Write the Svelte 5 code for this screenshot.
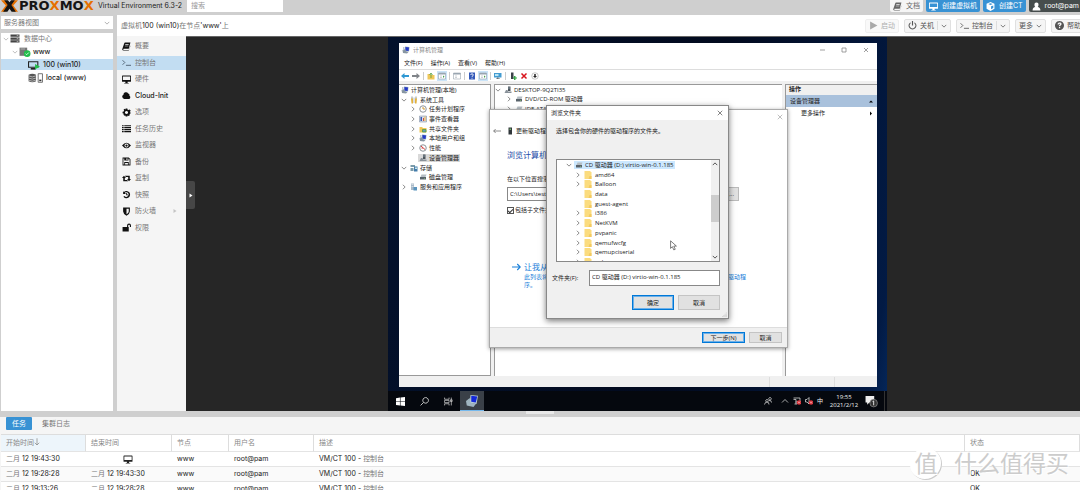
<script>
  const menu = [
    { icon: 'book', label: '概要' },
    { icon: 'term', label: '控制台', active: true },
    { icon: 'screen', label: '硬件' },
    { icon: 'cloud', label: 'Cloud-Init', latin: true },
    { icon: 'gear', label: '选项' },
    { icon: 'list', label: '任务历史' },
    { icon: 'eye', label: '监视器' },
    { icon: 'floppy', label: '备份' },
    { icon: 'retweet', label: '复制' },
    { icon: 'history', label: '快照' },
    { icon: 'shield', label: '防火墙', sub: true },
    { icon: 'unlock', label: '权限' },
  ];

  const tasks = [
    { start: '12 19:43:30', end: null, status: '' },
    { start: '12 19:28:28', end: '12 19:43:30', status: 'OK' },
    { start: '12 19:13:26', end: '12 19:28:28', status: 'OK' },
  ];

  // level, open state (v = open, > = closed), icon, label
  const mgmtTree = [
    [0, '', 'pc', '计算机管理(本地)'],
    [1, 'v', 'tools', '系统工具'],
    [2, '>', 'clock', '任务计划程序'],
    [2, '>', 'event', '事件查看器'],
    [2, '>', 'share', '共享文件夹'],
    [2, '>', 'pc', '本地用户和组'],
    [2, '>', 'perf', '性能'],
    [2, '', 'device', '设备管理器'],
    [1, 'v', 'store', '存储'],
    [2, '', 'drive', '磁盘管理'],
    [1, '>', 'service', '服务和应用程序'],
  ];

  const folders = [
    ['amd64', true], ['Balloon', true], ['data', false], ['guest-agent', false],
    ['i386', true], ['NetKVM', true], ['pvpanic', true], ['qemufwcfg', true],
    ['qemupciserial', true], ['qxl', true],
  ];

  const toolbar = ['back', 'fwd', '|', 'up', 'pane*', '|', 'props', '|', 'help', 'pane*', '|', 'monitor', '|', 'plug', 'del', 'down'];

  const icons = {
    book: 'M5 1h10l-3 11H3c-1 0-1 2 0 2h9l3-8v1l-3 8H3C0 15 0 13 1 11L4 2zM6 4l-.4 1.200h6L12 4zM5.400 6.500L5 7.700h6l.4-1.200z',
    screen: 'M1 1h14q1 0 1 1v9q0 1-1 1h-5v2h2v1H4v-1h2v-2H1q-1 0-1-1V2q0-1 1-1zM1.500 2.500v6.500h13V2.500z',
    cloud: 'M4 14a4 4 0 0 1-1.500-7.500A4.500 4.500 0 0 1 11 4.500a3 3 0 0 1 2 4A3 3 0 0 1 13 14z',
    gear: 'M6.500 1h3l.5 2 1.500.6 2-1 1.900 2-1.100 1.900.7 1.500v2l-1.500.7 .3 2-2.300 1.700-1.500-.9-.5 1.500h-3L6 13.500l-1.500.4-1.900-2 .6-1.600L1 9.500v-3l2-.5.6-1.500-.8-1.500L4.500 1.500 6 2.500zM8 5.200a2.800 2.800 0 1 0 .01 0z',
    list: 'M0 2h3v2H0zM4 2h12v2H4zM0 5.500h3v2H0zM4 5.500h12v2H4zM0 9h3v2H0zM4 9h12v2H4zM0 12.500h3v2H0zM4 12.500h12v2H4z',
    eye: 'M0 8q8-10 16 0q-8 10-16 0zM8 4.500a3.500 3.500 0 1 0 .01 0zM8 6a2 2 0 1 1-.01 0z',
    floppy: 'M1 1h11l3 3v11H1zM2.500 2.500v11H4V9h8v4.500h1.500v-9L11.500 2.500V6H4V2.500zM7.500 2.500V5H10V2.500zM5.500 10.500v3h5v-3z',
    retweet: 'M3.500 3L0 7h2.200v6H11l-2-2.500H5V7h2zM12.500 13L16 9h-2.200V3H5l2 2.500h4V9H9z',
    history: 'M2 2v5h5L5 5a4 4 0 1 1-.5 5.500L2.500 12A6.500 6.500 0 1 0 3.500 3.500zM7.500 5v4.500H11V8H9V5z',
    shield: 'M2 1h12v7q0 4-6 7.500Q2 12 2 8zM8 3v10q4-2.500 4-5V3z',
    unlock: 'M1 7h8V4.500a3.500 3.500 0 0 1 7 0V7h-2V4.500a1.500 1.500 0 0 0-3 0V7h1v8H1z',
    power: 'M7 0h2v8H7zM4.500 2v2.500a5 5 0 1 0 7 0V2a7 7 0 1 1-7 0z',
    play: 'M2 1l13 7-13 7z',
    cube: 'M8 0l7 3v9l-7 4-7-4V3zM8 2L4 3.600 8 5.500l4-1.900zM9 7.500v5.500l4-2.300V6z',
    user: 'M8 1c5 0 4 7 2 8 3 .5 5 2 5 6H1c0-4 2-5.500 5-6C4 8 3 1 8 1z',
    question: 'M8 0a8 8 0 1 1-.01 0zM4.500 6h2.200q.2-1.500 1.500-1.300c1.300.3.8 1.400 0 2-1 .7-1.200 1.200-1.200 2.500h2.200c0-1.500 2.500-1.500 2.500-4C11.500 2 4.800 1.800 4.500 6zM7 10.500V13h2.200v-2.500z',
    server: 'M0 1h16v4H0zM0 6h16v4H0zM0 11h16v4H0zM11 2.500v1h3v-1zM11 7.500v1h3v-1zM11 12.500v1h3v-1z',
  };
</script>

{#snippet fa(name)}
  <svg class="fa" viewBox="0 0 16 16" aria-hidden="true">
    {#if name === 'term'}
      <path d="M1 4l4 4-4 4M7 13h9" fill="none" stroke="currentColor" stroke-width="1.5" />
    {:else}
      <path d={icons[name]} fill="currentColor" fill-rule="evenodd" />
    {/if}
  </svg>
{/snippet}

{#snippet chev(dir)}
  <svg class="chev" viewBox="0 0 8 8" aria-hidden="true">
    {#if dir}
      <path d={{ v: 'M1 2.500l3 3 3-3', '>': 'M2.500 1l3 3-3 3', '^': 'M1 5.500l3-3 3 3' }[dir]} fill="none" stroke="currentColor" />
    {/if}
  </svg>
{/snippet}

{#snippet win(name)}
  <svg class="win-ico" viewBox="0 0 16 16" aria-hidden="true">
    {#if name === 'pc'}
      <path d="M6 1l9 1-1 9-8-1z" fill="#93a9bd" /><path d="M7 2l7 1-1 7-6-1z" fill="#2438c8" />
      <path d="M1 8l5-2 1 4 6 2-3 3-8-1z" fill="#8795a1" /><path d="M2 2h3v5l-3 2z" fill="#bcc7d0" />
    {:else if name === 'tools'}
      <path d="M4 1v5M12 1v5" stroke="#8b949a" stroke-width="2" /><path d="M2 5h4v10H3zM10 5h4l-1 10h-3z" fill="#e2b13c" /><path d="M7 3h2v11H7z" fill="#b8bfc4" />
    {:else if name === 'clock' || name === 'perf'}
      <circle cx="8" cy="8" r="6.500" fill="#fff" stroke="#8d9398" stroke-width="2" />
      <path d={name === 'clock' ? 'M8 4v4h4' : 'M4 4l8 7M5 8h3'} fill="none" stroke={name === 'clock' ? '#d09a35' : '#d33c3c'} stroke-width="2" />
    {:else if name === 'event'}
      <path d="M1 2h14v12H1z" fill="#d8dde6" stroke="#70829b" /><path d="M3 4h3v8H3z" fill="#3759b5" /><path d="M8 6h2v6H8z" fill="#cc5544" /><path d="M11 3h2v9h-2z" fill="#edb63e" />
    {:else if name === 'share' || name === 'up'}
      <path d="M1 4h5l2 2h7v9H1z" fill="#efc75a" /><path d={name === 'up' ? 'M8 12V3M5 6l3-4 3 4' : 'M7 9h7v5H7z'} fill={name === 'up' ? 'none' : '#6d9dba'} stroke="#4c9c3f" stroke-width="1.500" />
    {:else if name === 'device'}
      <path d="M8 1h5v9H8z" fill="#4d555c" /><path d="M1 14l3-6h3l1 3h7v3z" fill="#899199" /><path d="M9 3h2v2H9z" fill="#b6d1df" />
    {:else if name === 'store'}
      <path d="M1 2h9v4H1zM1 8h6v6H1z" fill="#7b9baa" /><path d="M8 5h7v10H8z" fill="#447caa" /><path d="M10 7h4v3h-4z" fill="#c9e6e9" />
    {:else if name === 'drive'}
      <path d="M5 3h10l-2 5H3z" fill="#b6bec4" /><path d="M2 8h12v5H2z" fill="#59636b" /><path d="M10 10h2v1h-2z" fill="#8fe26b" />
    {:else if name === 'service'}
      <path d="M2 1h6v13H2z" fill="#a9bac9" /><path d="M7 8h7v7H7z" fill="#5b94bd" /><path d="M3 3h4v1H3zM3 6h4v1H3z" fill="#fff" />
    {:else if name === 'back' || name === 'fwd'}
      <path d={name === 'back' ? 'M0 8l7-6v4h9v4H7v4z' : 'M16 8L9 2v4H0v4h9v4z'} fill={name === 'back' ? '#2f98d3' : '#808489'} />
    {:else if name === 'pane' || name === 'props'}
      <path d="M1 2h14v12H1z" fill="#fff" stroke="#84929e" /><path d="M1 2h14v3H1z" fill="#99a5b0" /><path d="M4 8h4M4 11h4" stroke="#9aa4ac" />
      {#if name === 'pane'}<path d="M10 7l3 2-3 3z" fill="#45a049" />{/if}
    {:else if name === 'help'}
      <path d="M2 1h12v14H2z" fill="#3359b9" /><path d="M5.500 6q0-2.500 2.500-2.500T10.500 6Q10.500 7.500 8 9v1.500M8 12v1.500" fill="none" stroke="#fff" stroke-width="1.700" />
    {:else if name === 'monitor'}
      <path d="M0 2h15v9H0z" fill="#439bd0" /><path d="M2 4h7v4H2z" fill="#b9e4f5" /><path d="M6 11h3v2h3v1H4v-1h2z" fill="#65727b" />
    {:else if name === 'plug'}
      <path d="M4 1h5v13H4z" fill="#3b4248" /><path d="M10 8h3v3h3v2h-3v3h-3v-3H8v-2h2z" fill="#38a548" />
    {:else if name === 'del'}
      <path d="M3 3l10 10M13 3L3 13" stroke="#d8141c" stroke-width="3" />
    {:else if name === 'down'}
      <circle cx="8" cy="8" r="6.500" fill="#fff" stroke="#8e8e8e" /><path d="M6.500 4h3v4H12l-4 4-4-4h2.500z" fill="#222" />
    {:else if name === 'usb'}
      <path d="M5 1h7v14H5z" fill="#30363a" /><path d="M7 3h3v3H7z" fill="#6fb365" />
    {:else if name === 'folder'}
      <path d="M1 0h11l3 3v13H1z" fill="#fbdc7f" /><path d="M11 10h4v6H9z" fill="#f3ca60" />
    {/if}
  </svg>
{/snippet}

<div class="app">
  <header class="top">
    <svg class="logo" viewBox="0 0 32 24" aria-label="Proxmox">
      <path d="M0 0h8l8 9-8 13H0l9-12zM32 0h-8l-8 9 8 13h8l-9-12z" fill="#e57000" />
      <path d="M6 0h7l3 4 3-4h7l-6.500 9L28 22h-8l-4-6-4 6H4l8.500-13z" fill="#151515" />
    </svg>
    <span class="brand">PRO<b>X</b>MO<b>X</b></span>
    <span class="ver">Virtual Environment 6.3-2</span>
    <input class="search" placeholder="搜索" aria-label="搜索" />
    <div class="top-btns">
      <button class="tb light">{@render fa('book')}文档</button>
      <button class="tb blue">{@render fa('screen')}创建虚拟机</button>
      <button class="tb blue">{@render fa('cube')}创建CT</button>
      <button class="tb dark">{@render fa('user')}root@pam {@render chev('v')}</button>
    </div>
  </header>

  <div class="main">
    <aside class="nav">
      <div class="view">
        <select aria-label="视图"><option>服务器视图</option></select>
        {@render chev('v')}
      </div>
      <ul class="tree">
        <li class="l0">{@render chev('v')}{@render fa('server')}<span>数据中心</span></li>
        <li class="l1 latin">
          {@render chev('v')}
          <svg class="node" viewBox="0 0 22 18" aria-hidden="true"><path d="M1 1h14v15H1z" fill="#777" /><path d="M3 3h8v1H3z" fill="#ddd" /><circle cx="15" cy="12" r="6" fill="#21bf4b" /><path d="M12 12l2 2 4-4" fill="none" stroke="#fff" stroke-width="1.500" /></svg>
          <span>www</span>
        </li>
        <li class="l2 latin sel">
          <svg class="node" viewBox="0 0 22 18" aria-hidden="true"><path d="M1 3h17v10H1z" fill="none" stroke="#222" stroke-width="2" /><path d="M5 16h9" stroke="#222" stroke-width="3" /><path d="M13 7l9 5-9 5z" fill="#21bf4b" /></svg>
          <span>100 (win10)</span>
        </li>
        <li class="l2 latin">
          <svg class="node wide" viewBox="0 0 28 18" aria-hidden="true"><path d="M1 3q7-4 14 0v12q-7 4-14 0z" fill="#555" /><path d="M1 5q7 4 14 0M1 9q7 4 14 0M1 13q7 4 14 0" fill="none" stroke="#fff" /><path d="M19 1h8v16h-8z" fill="#fff" stroke="#555" stroke-width="1.500" /><path d="M21 12h4v3h-4z" fill="#333" /></svg>
          <span>local (www)</span>
        </li>
      </ul>
    </aside>

    <section class="content">
      <div class="bar">
        <h1>虚拟机<b>100 (win10)</b>在节点<b>'www'</b>上</h1>
        <button class="bt" disabled>{@render fa('play')}启动</button>
        <button class="bt">{@render fa('power')}关机<i></i>{@render chev('v')}</button>
        <button class="bt">{@render fa('term')}控制台<i></i>{@render chev('v')}</button>
        <button class="bt">更多 {@render chev('v')}</button>
        <button class="bt">{@render fa('question')}帮助</button>
      </div>
      <div class="body">
        <nav class="menu">
          {#each menu as m}
            <a href="#{m.icon}" class:active={m.active} class:latin={m.latin}>
              {@render fa(m.icon)}<span>{m.label}</span>
              {#if m.sub}<svg class="sub" viewBox="0 0 8 8" aria-hidden="true"><path d="M1 0l6 4-6 4z" fill="#c4c4c4" /></svg>{/if}
            </a>
          {/each}
        </nav>

        <div class="console">
          <button class="handle" aria-label="展开"><svg viewBox="0 0 8 8"><path d="M1 0l6 4-6 4z" fill="#fff" /></svg></button>
          <div class="vm">
            <!-- computer management -->
            <div class="w mgmt">
              <div class="w-title">{@render win('pc')}<span>计算机管理</span>
                <svg class="caps" viewBox="0 0 50 8" aria-hidden="true"><path d="M1 4h5M23 2h4v4h-4zM45 2l4 4M49 2l-4 4" fill="none" stroke="#888" stroke-width=".8" /></svg>
              </div>
              <div class="w-menu"><span>文件(F)</span><span>操作(A)</span><span>查看(V)</span><span>帮助(H)</span></div>
              <div class="w-tools">
                {#each toolbar as t}
                  {#if t === '|'}<i></i>{:else}<span class:on={t.endsWith('*')}>{@render win(t.replace('*', ''))}</span>{/if}
                {/each}
              </div>
              <div class="panes">
                <div class="pane-l">
                  <ul class="wt">
                    {#each mgmtTree as [lvl, open, ico, label]}
                      <li class="d{lvl}">
                        {#if lvl}{@render chev(open)}{/if}
                        <span class="it" class:cur={ico === 'device'}>{@render win(ico)}<span>{label}</span></span>
                      </li>
                    {/each}
                  </ul>
                </div>
                <div class="pane-m">
                  <ul class="wt dev">
                    <li>{@render chev('v')}<span class="it">{@render win('device')}<span>DESKTOP-9Q2TI35</span></span></li>
                    <li class="d2">{@render chev('>')}<span class="it">{@render win('drive')}<span>DVD/CD-ROM 驱动器</span></span></li>
                    <li class="d2">{@render chev('>')}<span class="it">{@render win('drive')}<span>IDE ATA/ATAPI 控制器</span></span></li>
                  </ul>
                </div>
                <div class="pane-r">
                  <div class="act-h">操作</div>
                  <div class="act-s">设备管理器<svg viewBox="0 0 8 8"><path d="M0 6l4-4 4 4z" /></svg></div>
                  <div class="act-m">更多操作<svg viewBox="0 0 8 8"><path d="M2 0l4 4-4 4z" /></svg></div>
                </div>
              </div>
              <div class="w-status"><i></i><i></i></div>
            </div>

            <!-- driver wizard -->
            <div class="w wizard">
              <div class="wz-close"><svg viewBox="0 0 8 8"><path d="M1 1l6 6M7 1L1 7" stroke="#aaa" /></svg></div>
              <div class="wz-top">
                <svg viewBox="0 0 12 8" aria-hidden="true"><path d="M12 4H1M4 1L1 4l3 3" fill="none" stroke="#555" /></svg>
                {@render win('usb')}<span>更新驱动程序 - PCI 设备</span>
              </div>
              <div class="wz-body">
                <h2>浏览计算机上的驱动程序</h2>
                <label for="path">在以下位置搜索驱动程序:</label>
                <div class="wz-path"><input id="path" value="C:\Users\test\Documents" /><button>浏览...</button></div>
                <label class="chk"><input type="checkbox" checked />包括子文件夹(I)</label>
              </div>
              <div class="wz-link">
                <svg viewBox="0 0 12 10" aria-hidden="true"><path d="M0 5h11M7 1l4 4-4 4" fill="none" stroke="#1a80da" stroke-width="1.500" /></svg>
                <div>
                  <a href="#pick">让我从计算机上的可用驱动程序列表中选取(L)</a>
                  <p>此列表将显示与设备兼容的可用驱动程序，以及与该设备属于同一类别的所有驱动程序。</p>
                </div>
              </div>
              <div class="wz-foot"><button class="wb def">下一步(N)</button><button class="wb">取消</button></div>
            </div>

            <!-- folder picker -->
            <div class="w picker">
              <div class="pk-title">浏览文件夹<svg viewBox="0 0 8 8"><path d="M1 1l6 6M7 1L1 7" stroke="#333" stroke-width=".8" /></svg></div>
              <div class="pk-body">
                <p>选择包含你的硬件的驱动程序的文件夹。</p>
                <div class="pk-box">
                  <ul class="wt pk-tree">
                    <li class="root">{@render chev('v')}<span class="it">{@render win('drive')}<span>CD 驱动器 (D:) virtio-win-0.1.185</span></span></li>
                    {#each folders as [name, kids]}
                      <li class="d2">{@render chev(kids ? '>' : '')}<span class="it">{@render win('folder')}<span>{name}</span></span></li>
                    {/each}
                  </ul>
                  <div class="sb">{@render chev('^')}<i></i>{@render chev('v')}</div>
                </div>
                <div class="pk-row"><label for="folder">文件夹(F):</label><input id="folder" value="CD 驱动器 (D:) virtio-win-0.1.185" /></div>
                <div class="pk-btns"><button class="wb def">确定</button><button class="wb">取消</button></div>
              </div>
              <svg class="grip" viewBox="0 0 8 8"><path d="M7 1v1M5 3v1M7 3v1M3 5v1M5 5v1M7 5v1M1 7v1M3 7v1M5 7v1M7 7v1" stroke="#aaa" /></svg>
            </div>
            <svg class="cursor" viewBox="0 0 12 18" aria-hidden="true"><path d="M1 1v13l3-3 2.500 5.500 2.500-1L6.500 10H11z" fill="#fff" stroke="#222" /></svg>

            <div class="taskbar">
              <span class="tk"><svg viewBox="0 0 16 16"><path d="M0 2l7-1v6.500H0zM8 1l8-1v7.500H8zM0 8.500h7V15l-7-1zM8 8.500h8V16l-8-1z" fill="#fff" /></svg></span>
              <span class="tk"><svg viewBox="0 0 16 16"><path d="M10 1a5 5 0 1 1-.01 0zM6.500 9.500L1 15" fill="none" stroke="#ddd" stroke-width="1.500" /></svg></span>
              <span class="tk"><svg viewBox="0 0 16 16"><path d="M1 1v3h8V1M1 15v-3h8v3M1 6h8v4H1zM13 1v14M11.500 5h3v3h-3z" fill="none" stroke="#ccc" stroke-width="1.300" /></svg></span>
              <span class="tk run"><svg viewBox="0 0 16 16"><path d="M6 0l10 1-2 11-9-1z" fill="#b9ccd8" /><path d="M7 1l8 1-2 8-6-1z" fill="#1428d8" /><path d="M0 8l5-4 1 6 7 2-3 4-9-2z" fill="#9fb4c0" /></svg></span>
              <span class="gap"></span>
              <svg class="ty" viewBox="0 0 16 16"><path d="M6 5a2.500 2.500 0 1 1-.01 0zM1 15q1-5 5-5t4 5M12 1a2.500 2.500 0 1 1-.01 0zM10 7q5-1 5 4" fill="none" stroke="#ddd" stroke-width="1.500" /></svg>
              <span class="sp"></span>
              <svg class="ty" viewBox="0 0 16 16"><path d="M2 11l6-6 6 6" fill="none" stroke="#ddd" stroke-width="1.500" /></svg>
              <svg class="ty" viewBox="0 0 16 16"><path d="M1 2h13v8H5M1 5h5v9M3 14h5" fill="none" stroke="#ddd" stroke-width="1.500" /><circle cx="12" cy="11" r="4.500" fill="#d92c35" /><path d="M10 9l4 4M14 9l-4 4" stroke="#fff" /></svg>
              <svg class="ty" viewBox="0 0 16 16"><path d="M1 5h3l4-4v13l-4-4H1z" fill="none" stroke="#ddd" stroke-width="1.500" /><circle cx="12" cy="11" r="4.500" fill="#d92c35" /><path d="M10 9l4 4M14 9l-4 4" stroke="#fff" /></svg>
              <span>中</span>
              <span class="clock">19:55<br />2021/2/12</span>
              <svg class="note" viewBox="0 0 24 24"><path d="M1 2h16v12H8l-4 4v-4H1z" fill="#eee" /><circle cx="16" cy="15" r="7" fill="#333" stroke="#aaa" /><path d="M14 12l2-1v8" fill="none" stroke="#fff" stroke-width="1.500" /></svg>
              <i></i>
            </div>
          </div>
        </div>
      </div>
    </section>
  </div>

  <div class="split"><span></span></div>

  <section class="log">
    <div class="tabs"><button class="on">任务</button><button>集群日志</button></div>
    <table>
      <colgroup><col class="c-time" /><col class="c-end" /><col class="c-node" /><col class="c-time" /><col /><col class="c-st" /></colgroup>
      <thead>
        <tr>
          <th class="sorted">开始时间<svg viewBox="0 0 8 10"><path d="M4 0v9M1 6l3 3 3-3" fill="none" stroke="#888" /></svg></th>
          <th>结束时间</th><th>节点</th><th>用户名</th><th>描述</th><th>状态</th>
        </tr>
      </thead>
      <tbody>
        {#each tasks as t}
          <tr>
            <td><em>二月</em> {t.start}</td>
            <td class:busy={!t.end}>{#if t.end}<em>二月</em> {t.end}{:else}{@render fa('screen')}{/if}</td>
            <td>www</td>
            <td>root@pam</td>
            <td>VM/CT 100 - <em>控制台</em></td>
            <td>{t.status}</td>
          </tr>
        {/each}
      </tbody>
    </table>
  </section>

  <div class="mark"><span>值</span>什么值得买</div>
</div>

<style>
  :global(body){background:#fff}
  .app{position:relative;height:100vh;display:flex;flex-direction:column;overflow:hidden;background:#cfcfcf;
    font:7px/10px Inter,"Noto Sans CJK SC",sans-serif;color:#777}
  .app *{box-sizing:border-box}
  button,input,select{font:inherit;color:inherit;margin:0;padding:0;border:0;border-radius:0;background:none}
  button{display:flex;align-items:center;justify-content:center;white-space:nowrap}
  ul{list-style:none;margin:0;padding:0}
  h1,h2,p{margin:0;font:inherit}
  a{color:inherit;text-decoration:none}
  svg{display:block;flex-shrink:0}
  .fa{width:9px;height:9px}
  .chev{width:6px;height:6px}
  .latin{color:#222;font-weight:500}

  /* top bar */
  .top{height:15px;flex-shrink:0;display:flex;align-items:flex-start;line-height:12px}
  .logo{width:17px;height:13px;margin-left:1px}
  .brand{width:79px;margin-left:1px;font:bold 13px/12px "DejaVu Sans",sans-serif;color:#151515}
  .brand b{color:#e57000}
  .ver{width:89px;color:#222;white-space:nowrap}
  .search{width:96px;height:12px;padding-left:4px;background:#fff}
  .search::placeholder{color:#999;opacity:1}
  .top-btns{margin-left:auto;display:flex;gap:3px;margin-right:-12px}
  .tb{height:12px;padding:0 3px;gap:4px;border-radius:0 0 2px 2px}
  .light{background:#f5f5f5;color:#666}
  .blue{background:#3892d4;color:#fff}
  .dark{background:#464d4d;color:#fff}

  /* resource tree */
  .main{flex:1;min-height:0;display:flex;gap:4px}
  .nav{width:113px;flex-shrink:0;display:flex;flex-direction:column;gap:4px;padding:1px 0 0 1px}
  .view{height:13px;display:flex;align-items:center;background:#fff;padding:0 3px}
  .view select{flex:1;appearance:none;outline:0}
  .view .chev{color:#999}
  .tree{flex:1;background:#fff}
  .tree li{height:11px;margin-bottom:2px;display:flex;align-items:center;gap:4px;white-space:nowrap}
  .tree .chev{color:#aaa;margin-right:-3px}
  .tree .fa{width:10px;color:#444}
  .l0{padding-left:2px}
  .l1{padding-left:11px}
  .l1 .node{margin-right:-2px}
  .l2{padding-left:27px}
  .l2 .node{margin-right:-1px}
  .node{width:12px;height:10px}
  .wide{width:15px}
  .sel{background:#c2ddf2}

  .content{flex:1;min-width:0;display:flex;flex-direction:column;overflow:hidden}
  .bar{height:21px;flex-shrink:0;display:flex;align-items:center;gap:5px;background:#fff;padding-left:4px;margin-right:-5px}
  .bar h1{flex:1}
  .bar b{font-weight:400;color:#222}
  .bt{height:14px;padding:0 3px;gap:3px;background:#f5f5f5;border:1px solid #e0e0e0;border-radius:2px;color:#555}
  .bt i{width:1px;height:9px;background:#ddd}
  .bt:disabled{opacity:.5}
  .body{flex:1;min-height:0;display:flex}
  .menu{width:69px;flex-shrink:0;background:#f5f5f5;padding-top:2px}
  .menu{display:grid;grid-template-rows:repeat(12,1fr);align-content:start;align-items:center;height:200px;box-shadow:0 200px #f5f5f5}
  .menu a{height:14px;display:flex;align-items:center;gap:4px;padding-left:5px}
  .menu .fa{color:#111}
  .menu .active{background:#c2ddf2}
  .menu .active .fa{color:#456}
  .sub{width:4px;height:6px;margin-left:auto;margin-right:9px}

  /* vm console */
  .console{position:relative;flex:1;min-width:0;display:flex;justify-content:center;padding-left:9px;background:#262626;border-top:1px solid #666}
  .handle{position:absolute;left:0;top:144px;width:9px;height:28px;background:#464646;border-radius:0 2px 2px 0}
  .handle svg{width:4px;height:5px}
  .vm{position:relative;width:499px;flex-shrink:0;display:flex;flex-direction:column;justify-content:flex-end;
    background:linear-gradient(100deg,#03112c 0,#020a1e 60%,#021a44 96%,#04285c);
    font:6px/8px "Open Sans","Noto Sans CJK SC",sans-serif;color:#222}
  .w{position:absolute;display:flex;flex-direction:column;background:#fff;white-space:nowrap}
  .win-ico{width:8px;height:8px}
  .mgmt{left:11px;top:6px;width:478px;height:344px}
  .w-title{height:14px;display:flex;align-items:center;gap:3px;padding-left:3px;color:#888}
  .caps{width:50px;height:8px;margin-left:auto;margin-right:8px}
  .w-menu{height:13px;display:flex;align-items:center;gap:8px;padding-left:5px;border-bottom:1px solid #ddd}
  .w-tools{height:11px;display:flex;align-items:center;gap:1px;padding-left:1px}
  .w-tools span{padding:1px}
  .w-tools .on{background:#cbe4f8}
  .w-tools i{width:1px;height:8px;margin:0 1px;background:#ccc}
  .panes{flex:1;min-height:0;display:flex;gap:3px;background:#f0f0f0;border-top:3px solid #f0f0f0}
  .pane-l{width:92px;border:1px solid #999;border-left:0;background:#fff}
  .pane-m{flex:1;border:1px solid #999;border-width:1px 0 0 1px;background:#fff}
  .pane-r{width:92px;border:1px solid #999;border-width:1px 0 0 1px;background:#fff}
  .wt{display:grid;grid-auto-rows:1fr}
  .wt li{display:flex;align-items:center;gap:2px;min-height:0}
  .wt .chev{color:#666}
  .it{display:flex;align-items:center;gap:2px;padding:0 1px}
  .cur{background:#d9d9d9}
  .pane-l .wt{height:107px}
  .d0{padding-left:1px}
  .d1{padding-left:2px}
  .d2{padding-left:11px}
  .dev{height:29px}
  .act-h{height:10px;padding-left:3px;background:#f0f0f0;font-weight:700}
  .act-s,.act-m{height:12px;display:flex;align-items:center;justify-content:space-between;padding:0 4px}
  .act-s{background:#a9c1dc}
  .act-m{padding-left:15px}
  .pane-r svg{width:4px;height:5px}
  .w-status{height:11px;display:flex;justify-content:flex-end;gap:64px;background:#f0f0f0;padding:1px 42px 0 0}
  .w-status i{width:1px;background:#ddd}

  .wizard{left:101px;top:72px;width:299px;height:239px;border:1px solid #aaa;box-shadow:0 1px 4px #0006}
  .wz-close{display:flex;justify-content:flex-end;padding:4px 4px 0}
  .wz-close svg{width:6px;height:6px}
  .wz-top{display:flex;align-items:center;gap:4px;height:21px;padding-left:3px}
  .wz-top>svg:first-child{width:8px;height:6px;margin-right:1px}
  .wz-top span{margin-left:-2px}
  .wz-body{padding:8px 48px 0 17px;display:flex;flex-direction:column}
  h2{font-size:8px;line-height:12px;color:#1c4ca8;margin-bottom:14px}
  .wz-path{display:flex;gap:6px;margin:4px 0 5px}
  .wz-path input{flex:1;min-width:0;height:14px;border:1px solid #888;padding:0 2px}
  .wz-path button{width:34px;height:14px;border:1px solid #bbb;background:#e1e1e1;justify-content:flex-end;padding-right:4px}
  .chk{display:flex;align-items:center;gap:1px}
  .chk input{appearance:none;display:flex;justify-content:center;width:7px;height:7px;border:1px solid #555;background:#fff}
  .chk input:checked::after{content:'';width:2px;height:4px;border:solid #333;border-width:0 1px 1px 0;rotate:45deg}
  .wz-link{display:flex;gap:3px;padding:47px 38px 0 22px;color:#1a80da}
  .wz-link svg{width:9px;height:8px;margin-top:2px}
  .wz-link a{display:block;font-size:8px;line-height:12px}
  .wz-link p{width:225px;white-space:normal}
  .wz-foot{margin-top:auto;height:20px;display:flex;align-items:center;justify-content:flex-end;gap:4px;padding-right:5px;background:#f0f0f0;border-top:1px solid #ddd}
  .wb{width:42px;height:15px;background:#e1e1e1;border:1px solid #c4c4c4}
  .def{border-color:#0078d7;box-shadow:inset 0 0 0 1px #6db0e8}
  .wz-foot .wb{width:33px;height:11px}
  .wz-foot .def{width:43px}

  .picker{left:158px;top:68px;width:183px;height:214px;border:1px solid #888;background:#f0f0f0;box-shadow:0 2px 6px #0008}
  .pk-title{height:14px;display:flex;align-items:center;justify-content:space-between;padding:0 5px 0 4px;background:#fff}
  .pk-title svg{width:6px;height:6px}
  .pk-body{padding:7px 8px 0 9px}
  .pk-box{height:103px;margin-top:24px;display:flex;border:1px solid #888;background:#fff;overflow:hidden}
  .pk-tree{flex:1;height:107px}
  .pk-tree .root{padding-left:9px}
  .pk-tree .root .it{background:#cce8ff}
  .pk-tree .d2{padding-left:18px}
  .pk-tree .d2 .it{gap:3px}
  .sb{width:8px;display:flex;flex-direction:column;align-items:center;justify-content:space-between;background:#f0f0f0;padding:1px 0}
  .sb i{width:8px;height:27px;margin-top:24px;margin-bottom:28px;background:#cdcdcd}
  .pk-row{display:flex;align-items:center;margin:8px 0 9px -4px}
  .pk-row label{width:37px}
  .pk-row input{flex:1;min-width:0;height:16px;padding:0 2px 4px;border:1px solid #888;background:#fff}
  .pk-btns{display:flex;justify-content:flex-end;gap:4px}
  .grip{position:absolute;right:1px;bottom:1px;width:5px;height:5px}
  .cursor{position:absolute;left:282px;top:203px;width:7px;height:11px}

  .taskbar{height:20px;display:flex;align-items:center;gap:4px;background:#05080e;color:#eee}
  .tk{width:24px;height:20px;display:flex;align-items:center;justify-content:center;margin-right:-4px}
  .tk svg{width:9px;height:9px}
  .run{background:#3a4048;border-bottom:1px solid #76b9ed}
  .run svg{width:12px;height:12px}
  .gap{flex:1}
  .sp{width:1px}
  .ty{width:8px;height:8px}
  .clock{width:34px;text-align:center}
  .note{width:13px;height:13px}
  .taskbar i{width:1px;height:20px;margin:0 2px;background:#333}

  /* log panel */
  .split{height:6px;flex-shrink:0;display:flex;justify-content:center;background:#cfcfcf}
  .split span{width:28px;height:3px;background:#e8e8e8}
  .log{height:73px;flex-shrink:0;overflow:hidden;background:#f5f5f5;padding-left:1px}
  .tabs{height:17px;display:flex;align-items:flex-start;gap:5px;padding-left:5px}
  .tabs button{height:13px;padding:0 5px;border-radius:1px}
  .tabs .on{width:26px;background:#3892d4;color:#fff}
  table{width:100%;table-layout:fixed;border-collapse:separate;border-spacing:0;background:#fff}
  .c-time{width:85px}
  .c-end{width:86px}
  .c-node{width:57px}
  .c-st{width:115px}
  th,td{height:15px;padding:0 0 0 5px;text-align:left;font-weight:400;border-bottom:1px solid #e4e4e4}
  th{height:18px;border-top:1px solid #ddd;border-right:1px solid #ddd;color:#888}
  th svg{display:inline-block;width:6px;height:8px;vertical-align:-1px}
  .sorted{background:#edf5fb}
  td{color:#222}
  td em{font-style:normal;color:#777}
  tr:nth-child(even) td{background:#fafafa}
  .busy .fa{width:10px;height:9px;margin-left:32px}

  .mark{position:absolute;right:11px;bottom:10px;display:flex;align-items:center;gap:12px;font-size:23px;line-height:32px;color:#ccc;
    text-shadow:-1px -1px #fff,1px 1px #fff;pointer-events:none}
  .mark span{width:32px;height:32px;border-radius:50%;background:#fff;box-shadow:inset -1px -1px #ccc;text-align:center}
</style>
